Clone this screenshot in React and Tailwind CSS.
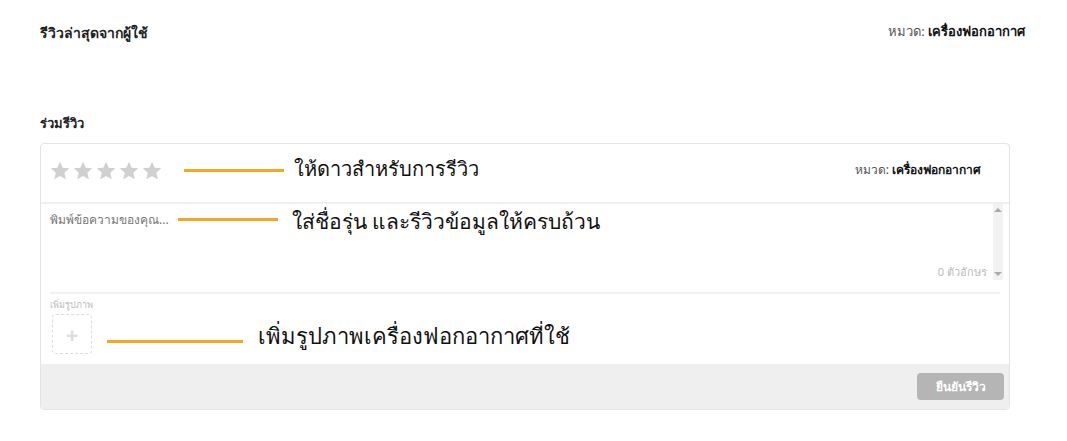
import React from "react";

const Star = () => (
  <svg width="20" height="19" viewBox="0 0 24 23" className="fill-[#d0d0d0]">
    <path d="M12 0.8l3.3 7.3 7.9.8-5.9 5.4 1.7 7.9L12 18.1l-6.9 4.1 1.7-7.9L.9 8.9l7.9-.8z" />
  </svg>
);

const Line = ({ w }) => <div className={`h-[3px] bg-[#f5a623] ${w}`} />;

export default function App() {
  return (
    <div className="w-[1067px] h-[441px] bg-white font-['Noto_Sans',sans-serif] relative">
      <div className="flex justify-between items-center pl-[40px] pr-[42px] pt-[20px] h-[44px]">
        <div className="text-[14px] font-semibold text-[#222]">รีวิวล่าสุดจากผู้ใช้</div>
        <div className="text-[13px] text-[#555]">
          หมวด: <span className="font-semibold text-[#111]">เครื่องฟอกอากาศ</span>
        </div>
      </div>
      <div className="pl-[40px] mt-[68px] text-[13px] font-semibold text-[#222] h-[22px] leading-[22px]">ร่วมรีวิว</div>
      <div className="ml-[40px] mt-[9px] w-[970px] h-[267px] border border-[#e4e4e4] rounded-[4px] flex flex-col overflow-hidden">
        <div className="h-[60px] border-b-2 border-[#f0f0f0] flex items-center px-[9px] pb-[6px]">
          <div className="flex gap-[3px]">
            <Star /><Star /><Star /><Star /><Star />
          </div>
          <div className="ml-[22px] flex items-center">
            <Line w="w-[100px]" />
            <div className="ml-[10px] text-[20px] text-[#111] -mt-[3px]">ให้ดาวสำหรับการรีวิว</div>
          </div>
          <div className="ml-auto mr-[19px] text-[12px] text-[#555]">
            หมวด: <span className="font-semibold text-[#111]">เครื่องฟอกอากาศ</span>
          </div>
        </div>
        <div className="h-[88px] flex">
          <div className="flex-1 relative pl-[9px] pt-[7px]">
            <div className="flex items-start">
              <div className="text-[12px] text-[#777] leading-[18px]">พิมพ์ข้อความของคุณ...</div>
              <div className="ml-[9px] mt-[7px]"><Line w="w-[100px]" /></div>
              <div className="ml-[14px] -mt-[5px] text-[21px] text-[#111]">ใส่ชื่อรุ่น และรีวิวข้อมูลให้ครบถ้วน</div>
            </div>
            <div className="absolute right-[6px] bottom-[12px] text-[11px] text-[#bbb]">0 ตัวอักษร</div>
          </div>
          <div className="w-[10px] mr-[6px] h-[76px] bg-[#f2f2f2] flex flex-col justify-between items-center py-[4px]">
            <div className="w-0 h-0 border-l-[4px] border-r-[4px] border-b-[4px] border-l-transparent border-r-transparent border-b-[#aaa]" />
            <div className="w-0 h-0 border-l-[4px] border-r-[4px] border-t-[4px] border-l-transparent border-r-transparent border-t-[#aaa]" />
          </div>
        </div>
        <div className="mx-[9px] border-t-2 border-[#f2f2f2]" />
        <div className="px-[9px] pt-[5px] h-[70px]">
          <div className="text-[9px] text-[#bbb] leading-[12px]">เพิ่มรูปภาพ</div>
          <div className="flex items-center mt-[3px]">
            <div className="ml-[2px] w-[40px] h-[40px] border border-dashed border-[#ddd] rounded-[4px] flex items-center justify-center text-[#ddd] text-[22px] font-bold leading-none">+</div>
            <div className="ml-[15px] mt-[14px]"><Line w="w-[136px]" /></div>
            <div className="ml-[15px] mt-[3px] text-[22px] text-[#111]">เพิ่มรูปภาพเครื่องฟอกอากาศที่ใช้</div>
          </div>
        </div>
        <div className="flex-1 bg-[#efefef] flex items-center justify-end pr-[5px]">
          <button className="w-[87px] h-[27px] bg-[#b5b5b5] rounded-[4px] text-white text-[12px] font-semibold">ยืนยันรีวิว</button>
        </div>
      </div>
    </div>
  );
}
